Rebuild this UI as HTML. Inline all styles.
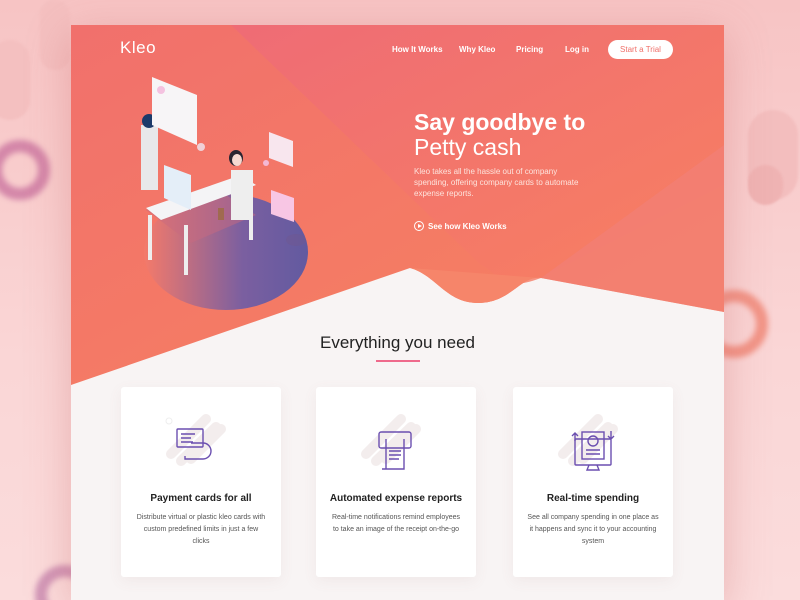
<!DOCTYPE html>
<html><head><meta charset="utf-8">
<style>
*{margin:0;padding:0;box-sizing:border-box}
html,body{width:800px;height:600px;overflow:hidden}
body{position:relative;font-family:"Liberation Sans",sans-serif;background:linear-gradient(180deg,#f7c4c4 0%,#fad6d6 60%,#fbdcdc 100%)}
.blob{position:absolute;background:#f2b9b9;border-radius:30px;filter:blur(1px)}
.ring{position:absolute;border-radius:50%;filter:blur(3px)}
.page{position:absolute;left:71px;top:25px;width:653px;height:575px;background:#f8f4f4;box-shadow:0 10px 40px rgba(200,100,100,.35);overflow:hidden}
.nav{position:absolute;top:0;left:0;width:100%;color:#fff;font-size:8px;font-weight:bold}
.nav span{position:absolute;top:20px}
.logo{position:absolute;left:49px;top:13px;font-size:17px;color:#fff;letter-spacing:.5px}
.btn{position:absolute;left:537px;top:15px;width:65px;height:19px;background:#fff;border-radius:10px;color:#f0706a;font-size:8px;text-align:center;line-height:19px;font-weight:normal}
h1{position:absolute;left:343px;top:85px;color:#fff;font-size:23px;line-height:25px;font-weight:bold}
h1 b{font-weight:normal}
.sub{position:absolute;left:343px;top:141px;width:180px;color:#fde3dc;font-size:8px;line-height:11px}
.see{position:absolute;left:343px;top:197px;color:#fff;font-size:8px;font-weight:bold;line-height:10px}
.see i{display:inline-block;width:10px;height:10px;border:1px solid #fff;border-radius:50%;vertical-align:middle;margin-right:4px;position:relative;top:-1px}
.see i:after{content:"";position:absolute;left:3px;top:2px;border-left:4px solid #fff;border-top:2.5px solid transparent;border-bottom:2.5px solid transparent}
h2{position:absolute;left:0;width:653px;text-align:center;top:308px;font-size:17px;font-weight:normal;color:#222}
.bar{position:absolute;left:305px;top:335px;width:44px;height:2px;background:#ef6a8c}
.card{position:absolute;top:362px;width:160px;height:190px;background:#fff;border-radius:3px;box-shadow:0 4px 14px rgba(150,100,100,.08);text-align:center}
.card h3{position:absolute;top:106px;width:100%;font-size:10px;color:#222}
.card p{position:absolute;top:125px;left:14px;width:132px;font-size:7px;line-height:12px;color:#555}
.card svg{position:absolute;left:40px;top:12px}
</style></head><body>
<div class="blob" style="left:-10px;top:40px;width:40px;height:80px;background:#f4c0c0"></div>
<div class="blob" style="left:40px;top:0px;width:30px;height:70px;background:#f4c0c0"></div>
<div class="blob" style="left:748px;top:110px;width:50px;height:90px;background:#f3bebe"></div>
<div class="blob" style="left:748px;top:165px;width:35px;height:40px;background:#efb3b3"></div>
<div class="ring" style="left:-10px;top:140px;width:60px;height:60px;border:12px solid #c56a9a;opacity:.7"></div>
<div class="ring" style="left:700px;top:290px;width:68px;height:68px;border:12px solid #f08a7a;opacity:.85"></div>
<div class="ring" style="left:35px;top:565px;width:60px;height:60px;border:12px solid #c07aa8;opacity:.7"></div>
<div class="page">
<svg width="653" height="575" style="position:absolute;left:0;top:0">
<defs>
<linearGradient id="g1" x1="0" y1="0" x2="1" y2="1"><stop offset="0" stop-color="#f1706c"/><stop offset="1" stop-color="#f7835f"/></linearGradient>
<linearGradient id="g2" x1="0" y1="0" x2="1" y2="1"><stop offset="0" stop-color="#ee6a78"/><stop offset="1" stop-color="#f88060"/></linearGradient>
<linearGradient id="g3" x1="0" y1="0" x2="1" y2="0"><stop offset="0" stop-color="#f47a6a"/><stop offset=".6" stop-color="#7b5fa0"/><stop offset="1" stop-color="#625aa0"/></linearGradient>
</defs>
<path d="M0 0H653V287L470 253 C450 250 440 278 407 278 C375 278 365 250 339 243 L0 360Z" fill="url(#g1)"/>
<path d="M160 0H653V160L470 253 C430 268 430 250 410 240Z" fill="url(#g2)" opacity=".8"/>
<path d="M653 120V287L470 253Z" fill="#f2807a" opacity=".6"/>
<path d="M339 243 C365 250 375 278 407 278 C440 278 450 250 470 253Z" fill="#f6856a"/>
<ellipse cx="155" cy="227" rx="82" ry="58" fill="url(#g3)"/>
<polygon points="75,185 140,160 185,190 120,218" fill="#c86a80" opacity=".5"/>
<polygon points="75,183 170,150 185,160 90,195" fill="#f4f4f6"/>
<rect x="77" y="190" width="4" height="45" fill="#eee"/><rect x="178" y="160" width="4" height="55" fill="#eee"/><rect x="113" y="200" width="4" height="50" fill="#eee"/>
<polygon points="93,140 120,150 120,185 93,173" fill="#e4eef8"/>
<rect x="70" y="100" width="17" height="65" fill="#e8e8ea"/>
<circle cx="78" cy="96" r="7" fill="#1c3a6a"/>
<polygon points="81,52 126,70 126,120 81,100" fill="#f7f5f7" rx="4"/>
<circle cx="90" cy="65" r="4" fill="#f4c2e0"/>
<rect x="160" y="145" width="22" height="50" fill="#eee"/>
<ellipse cx="165" cy="133" rx="7" ry="8" fill="#2a2430"/>
<ellipse cx="166" cy="135" rx="5" ry="6" fill="#f6d8d0"/>
<rect x="147" y="183" width="6" height="12" fill="#a06a50"/>
<polygon points="198,107 222,116 222,142 198,133" fill="#f8e6ee"/>
<polygon points="200,165 223,173 223,197 200,189" fill="#f8c6e4"/>
<circle cx="130" cy="122" r="4" fill="#f0d0d6"/><circle cx="195" cy="138" r="3" fill="#f4b8d4"/>
<ellipse cx="225" cy="215" rx="10" ry="6" fill="#70588f" opacity=".5"/>
</svg>
<div class="logo">Kleo</div>
<div class="nav"><span style="left:321px">How It Works</span><span style="left:388px">Why Kleo</span><span style="left:445px">Pricing</span><span style="left:494px">Log in</span><div class="btn">Start a Trial</div></div>
<h1>Say goodbye to<br><b>Petty cash</b></h1>
<div class="sub">Kleo takes all the hassle out of company spending, offering company cards to automate expense reports.</div>
<div class="see"><i></i>See how Kleo Works</div>
<h2>Everything you need</h2>
<div class="bar"></div>
<div class="card" style="left:50px">
<svg width="80" height="80"><path d="M10 55 L45 20 M20 62 L55 28 M30 60 L60 30" stroke="#f3eded" stroke-width="10" stroke-linecap="round"/><circle cx="8" cy="22" r="3" fill="none" stroke="#eee"/>
<g fill="none" stroke="#6b4fb0" stroke-width="1.4"><rect x="16" y="30" width="26" height="18" rx="1"/><path d="M20 35h14M20 39h10M20 43h12M30 44h12a8 8 0 0 1 0 16h-18v-3"/></g></svg>
<h3>Payment cards for all</h3><p>Distribute virtual or plastic kleo cards with custom predefined limits in just a few clicks</p></div>
<div class="card" style="left:245px">
<svg width="80" height="80"><path d="M10 55 L45 20 M20 62 L55 28 M30 60 L60 30" stroke="#f3eded" stroke-width="10" stroke-linecap="round"/>
<g fill="none" stroke="#6b4fb0" stroke-width="1.4"><rect x="23" y="33" width="32" height="16" rx="2"/><path d="M30 40v30h18V40M33 52h12M33 56h12M33 60h10M26 70h8"/></g></svg>
<h3>Automated expense reports</h3><p>Real-time notifications remind employees to take an image of the receipt on-the-go</p></div>
<div class="card" style="left:442px">
<svg width="80" height="80"><path d="M10 55 L45 20 M20 62 L55 28 M30 60 L60 30" stroke="#f3eded" stroke-width="10" stroke-linecap="round"/>
<g fill="none" stroke="#6b4fb0" stroke-width="1.4"><rect x="22" y="40" width="36" height="26" rx="1"/><rect x="29" y="33" width="22" height="27"/><circle cx="40" cy="42" r="5"/><path d="M33 51h14M33 55h14M36 66l-2 5h12l-2-5M22 42v-8M19 37l3-3 3 3M58 32v8M55 37l3 3 3-3"/></g></svg>
<h3>Real-time spending</h3><p>See all company spending in one place as it happens and sync it to your accounting system</p></div>
</div>
</body></html>
